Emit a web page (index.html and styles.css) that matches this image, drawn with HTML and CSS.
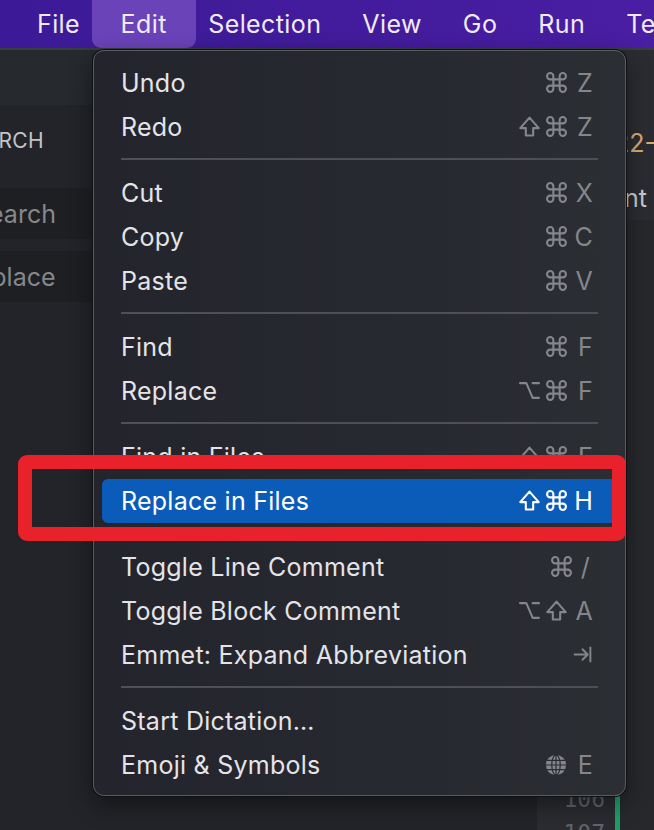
FILE: index.html
```html
<!DOCTYPE html>
<html>
<head>
<meta charset="utf-8">
<link rel="stylesheet" href="styles.css">
</head>
<body>
<div class="menubar">
  <span class="mb-item">File</span>
  <span class="mb-item active">Edit</span>
  <span class="mb-item">Selection</span>
  <span class="mb-item">View</span>
  <span class="mb-item">Go</span>
  <span class="mb-item">Run</span>
  <span class="mb-item">Terminal</span>
</div>
<div class="workspace">
  <aside class="sidebar">
    <div class="side-top"></div>
    <div class="side-body">
      <div class="side-title">SEARCH</div>
      <div class="side-input search">Search</div>
      <div class="side-input replace">Replace</div>
    </div>
  </aside>
  <main class="editor">
    <div class="gutter">
      <div class="gutter-fill"></div>
      <div class="ln">106</div>
      <div class="ln last">107</div>
    </div>
    <div class="diffbar">
      <div class="diff-empty"></div>
      <div class="diff-added"></div>
    </div>
    <div class="code">
      <div class="code-peek">
        <div class="code-line str">2022-</div>
        <div class="code-line txt">nt</div>
      </div>
    </div>
  </main>
</div>

<div class="menu">
  <div class="mi"><span class="ml">Undo</span><span class="sc"><svg class="k" viewBox="2 2 20 20"><path d="M15 6v12a3 3 0 1 0 3-3H6a3 3 0 1 0 3 3V6a3 3 0 1 0-3 3h12a3 3 0 1 0-3-3"/></svg><span class="kl">Z</span></span></div>
  <div class="mi"><span class="ml">Redo</span><span class="sc"><svg class="k" viewBox="2 2 20 20"><path d="M8.5 20.5v-7H3.2L12 3.5l8.8 10h-5.3v7z"/></svg><svg class="k" viewBox="2 2 20 20"><path d="M15 6v12a3 3 0 1 0 3-3H6a3 3 0 1 0 3 3V6a3 3 0 1 0-3 3h12a3 3 0 1 0-3-3"/></svg><span class="kl">Z</span></span></div>
  <div class="sep"></div>
  <div class="mi"><span class="ml">Cut</span><span class="sc"><svg class="k" viewBox="2 2 20 20"><path d="M15 6v12a3 3 0 1 0 3-3H6a3 3 0 1 0 3 3V6a3 3 0 1 0-3 3h12a3 3 0 1 0-3-3"/></svg><span class="kl">X</span></span></div>
  <div class="mi"><span class="ml">Copy</span><span class="sc"><svg class="k" viewBox="2 2 20 20"><path d="M15 6v12a3 3 0 1 0 3-3H6a3 3 0 1 0 3 3V6a3 3 0 1 0-3 3h12a3 3 0 1 0-3-3"/></svg><span class="kl">C</span></span></div>
  <div class="mi"><span class="ml">Paste</span><span class="sc"><svg class="k" viewBox="2 2 20 20"><path d="M15 6v12a3 3 0 1 0 3-3H6a3 3 0 1 0 3 3V6a3 3 0 1 0-3 3h12a3 3 0 1 0-3-3"/></svg><span class="kl">V</span></span></div>
  <div class="sep"></div>
  <div class="mi"><span class="ml">Find</span><span class="sc"><svg class="k" viewBox="2 2 20 20"><path d="M15 6v12a3 3 0 1 0 3-3H6a3 3 0 1 0 3 3V6a3 3 0 1 0-3 3h12a3 3 0 1 0-3-3"/></svg><span class="kl">F</span></span></div>
  <div class="mi"><span class="ml">Replace</span><span class="sc"><svg class="k" viewBox="2 2 20 20"><path d="M3 5h6l6 14h6M15 5h6"/></svg><svg class="k" viewBox="2 2 20 20"><path d="M15 6v12a3 3 0 1 0 3-3H6a3 3 0 1 0 3 3V6a3 3 0 1 0-3 3h12a3 3 0 1 0-3-3"/></svg><span class="kl">F</span></span></div>
  <div class="sep"></div>
  <div class="mi"><span class="ml">Find in Files</span><span class="sc"><svg class="k" viewBox="2 2 20 20"><path d="M8.5 20.5v-7H3.2L12 3.5l8.8 10h-5.3v7z"/></svg><svg class="k" viewBox="2 2 20 20"><path d="M15 6v12a3 3 0 1 0 3-3H6a3 3 0 1 0 3 3V6a3 3 0 1 0-3 3h12a3 3 0 1 0-3-3"/></svg><span class="kl">F</span></span></div>
  <div class="mi sel"><span class="ml">Replace in Files</span><span class="sc"><svg class="k" viewBox="2 2 20 20"><path d="M8.5 20.5v-7H3.2L12 3.5l8.8 10h-5.3v7z"/></svg><svg class="k" viewBox="2 2 20 20"><path d="M15 6v12a3 3 0 1 0 3-3H6a3 3 0 1 0 3 3V6a3 3 0 1 0-3 3h12a3 3 0 1 0-3-3"/></svg><span class="kl">H</span></span></div>
  <div class="sep"></div>
  <div class="mi"><span class="ml">Toggle Line Comment</span><span class="sc"><svg class="k" viewBox="2 2 20 20"><path d="M15 6v12a3 3 0 1 0 3-3H6a3 3 0 1 0 3 3V6a3 3 0 1 0-3 3h12a3 3 0 1 0-3-3"/></svg><span class="kl slash">/</span></span></div>
  <div class="mi"><span class="ml">Toggle Block Comment</span><span class="sc"><svg class="k" viewBox="2 2 20 20"><path d="M3 5h6l6 14h6M15 5h6"/></svg><svg class="k" viewBox="2 2 20 20"><path d="M8.5 20.5v-7H3.2L12 3.5l8.8 10h-5.3v7z"/></svg><span class="kl">A</span></span></div>
  <div class="mi"><span class="ml">Emmet: Expand Abbreviation</span><span class="sc"><svg class="k tab" viewBox="0 0 24 24"><path d="M3 12h15M12 6l6 6-6 6M21 4v16"/></svg></span></div>
  <div class="sep"></div>
  <div class="mi"><span class="ml">Start Dictation…</span><span class="sc"></span></div>
  <div class="mi"><span class="ml">Emoji &amp; Symbols</span><span class="sc"><svg class="k globe" viewBox="0 0 24 24"><circle cx="12" cy="12" r="11" class="g-disc"/><g class="g-lines"><ellipse cx="12" cy="12" rx="4.6" ry="11"/><path d="M12 1v22M1 12h22M2.6 7h18.8M2.6 17h18.8"/></g></svg><span class="kl">E</span></span></div>
</div>

<div class="callout"></div>
</body>
</html>
```

FILE: styles.css
```css
* { box-sizing: border-box; }

html, body {
  margin: 0;
  padding: 0;
  width: 654px;
  height: 830px;
  overflow: hidden;
  background: #222429;
  font-family: Inter, "Noto Sans", "Liberation Sans", sans-serif;
}

body {
  display: flex;
  flex-direction: column;
}

/* ---------- menu bar ---------- */
.menubar {
  height: 50px;
  flex: none;
  display: flex;
  align-items: stretch;
  padding-left: 16.5px;
  background: linear-gradient(90deg, #3c1a97 0%, #431c9d 60%, #4a1ea3 100%);
  border-bottom: 2px solid #3b3c42;
  white-space: nowrap;
  overflow: hidden;
}

.mb-item {
  display: flex;
  align-items: center;
  padding: 0 20.5px 1px;
  font-size: 25px;
  letter-spacing: 0.4px;
  color: #f1ebf8;
}

.mb-item.active {
  padding: 0 29px 1px;
  margin: 0 -8px 0 -9px;
  background: #6a43b9;
  border-radius: 0 0 9px 9px;
}

/* ---------- workspace ---------- */
.workspace {
  flex: 1;
  display: flex;
  min-height: 0;
}

.sidebar {
  width: 537px;
  flex: none;
  display: flex;
  flex-direction: column;
  background: #222429;
  overflow: hidden;
}

.side-top {
  height: 55px;
  flex: none;
  background: #26292e;
}

.side-body {
  display: flex;
  flex-direction: column;
}

.side-title {
  height: 70px;
  display: flex;
  align-items: center;
  margin-left: -43px;
  font-size: 21px;
  color: #c3c4c8;
  letter-spacing: 0.3px;
}

.side-input {
  height: 51px;
  margin-left: -31px;
  width: 300px;
  display: flex;
  align-items: center;
  padding-left: 4px;
  font-size: 25px;
  color: #86878c;
  background: #1d1f22;
}

.side-input.search {
  margin-top: 13px;
}

.side-input.replace {
  margin-top: 12px;
  margin-left: -43px;
}

/* ---------- editor ---------- */
.editor {
  flex: 1;
  display: flex;
  background: #26282c;
}

.gutter {
  width: 78px;
  flex: none;
  display: flex;
  flex-direction: column;
  background: #2a2c31;
}

.gutter-fill { flex: 1; }

.ln {
  height: 34px;
  flex: none;
  text-align: right;
  padding-right: 10px;
  font-family: "DejaVu Sans Mono", "Liberation Mono", monospace;
  font-size: 23px;
  line-height: 34px;
  color: #62656b;
  overflow: hidden;
}

.ln.last { height: 14px; }

.diffbar {
  width: 5px;
  flex: none;
  display: flex;
  flex-direction: column;
}

.diff-empty { flex: 1; }

.diff-added {
  height: 36px;
  background: #1f9d68;
}

.code {
  flex: 1;
  display: flex;
  flex-direction: column;
  overflow: hidden;
}

.code-peek {
  height: 170px;
  background: #2a2c31;
  padding-top: 76px;
  padding-left: 4px;
}

.code-line {
  height: 55px;
  font-size: 25px;
  line-height: 34px;
  white-space: nowrap;
}

.code-line.str { color: #dcaa6e; margin-left: -41px; }
.code-line.txt { color: #c9cacd; margin-left: 0; }

/* ---------- dropdown menu (overlay) ---------- */
.menu {
  position: absolute;
  left: 93px;
  top: 50px;
  width: 533px;
  height: 746px;
  padding: 10px 8px 8px;
  background: linear-gradient(90deg, #24252c 0%, #272930 60%, #2b2e33 100%);
  border: 1px solid #5a5b61;
  border-radius: 11px;
  box-shadow: 0 0 0 1px #101014, 0 8px 24px rgba(0, 0, 0, 0.45);
  display: flex;
  flex-direction: column;
}

.mi {
  height: 44px;
  flex: none;
  display: flex;
  align-items: center;
  justify-content: space-between;
  padding: 0 24px 1px 19px;
  border-radius: 6px;
  font-size: 25px;
  letter-spacing: 0.25px;
  color: #e4e4e8;
  white-space: nowrap;
}

.mi.sel {
  background: #0b5cb9;
  color: #ffffff;
}

.sc {
  display: flex;
  align-items: center;
  gap: 6px;
  color: #85868c;
}

.mi.sel .sc { color: #ffffff; }

.kl {
  display: inline-block;
  min-width: 20px;
  text-align: right;
  font-size: 25px;
}

.kl.slash { min-width: 12px; margin-right: 3px; }

.k {
  width: 21px;
  height: 21px;
  fill: none;
  stroke: currentColor;
  stroke-width: 2;
  stroke-linejoin: round;
  stroke-linecap: round;
}

.k.tab { width: 21px; height: 21px; stroke-width: 2.2; }

.k.globe { stroke: none; width: 22px; height: 22px; }
.g-disc { fill: #85868c; }
.g-lines { fill: none; stroke: #2a2c32; stroke-width: 1.3; }

.sep {
  height: 22px;
  flex: none;
  margin: 0 19px;
  padding-top: 9px;
}

.sep::before {
  content: "";
  display: block;
  height: 2px;
  background: #4f5057;
}

/* ---------- annotation box (overlay) ---------- */
.callout {
  position: absolute;
  left: 18px;
  top: 455px;
  width: 608px;
  height: 86px;
  border: 14px solid #e8212a;
  border-radius: 9px;
}
```
